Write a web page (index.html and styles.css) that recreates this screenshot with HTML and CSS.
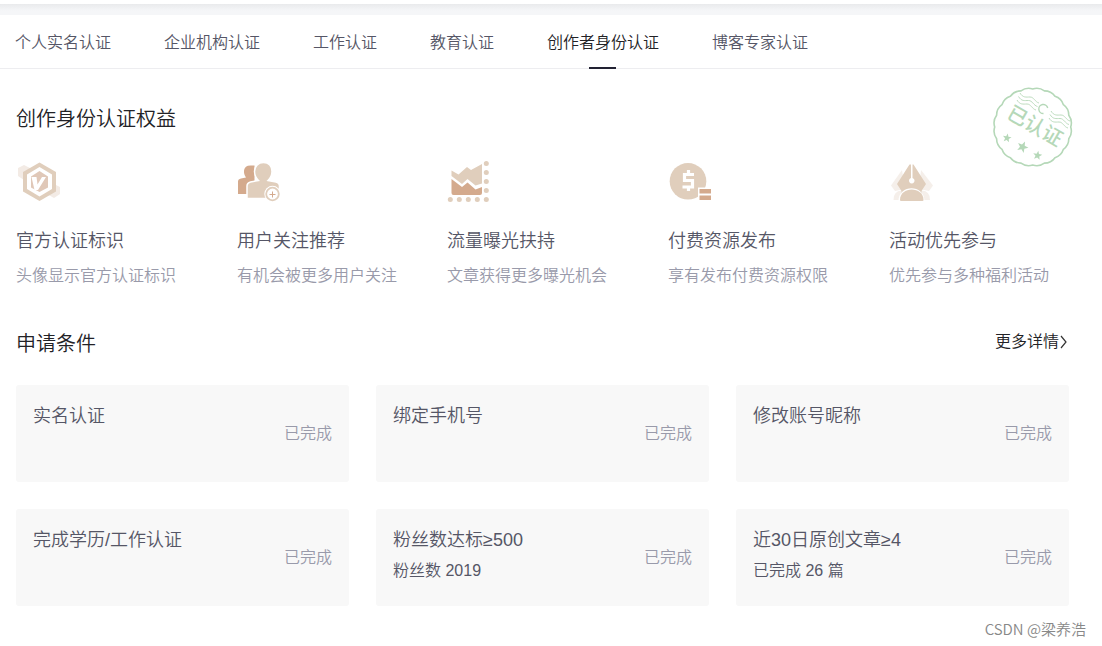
FILE: index.html
```html
<!DOCTYPE html>
<html lang="zh-CN">
<head>
<meta charset="utf-8">
<meta name="viewport" content="width=device-width, initial-scale=1">
<title>创作者身份认证</title>
<link rel="stylesheet" href="styles.css">
</head>
<body>
<div class="topbar"></div>
<nav class="tabs">
  <a class="tab" href="#">个人实名认证</a>
  <a class="tab" href="#">企业机构认证</a>
  <a class="tab" href="#">工作认证</a>
  <a class="tab" href="#">教育认证</a>
  <a class="tab active" href="#" aria-current="page">创作者身份认证</a>
  <a class="tab" href="#">博客专家认证</a>
</nav>
<main class="content">
  <svg class="stamp" width="110" height="105" viewBox="0 0 110 105" role="img" aria-label="已认证">
    <g fill="none" stroke="#b5d8b8">
      <path stroke-width="1.6" transform="translate(52.7 52)" d="M38 0A13 13 0 0 1 36.1 11.7A13 13 0 0 1 30.7 22.3A13 13 0 0 1 22.3 30.7A13 13 0 0 1 11.7 36.1A13 13 0 0 1 0 38A13 13 0 0 1 -11.7 36.1A13 13 0 0 1 -22.3 30.7A13 13 0 0 1 -30.7 22.3A13 13 0 0 1 -36.1 11.7A13 13 0 0 1 -38 0A13 13 0 0 1 -36.1 -11.7A13 13 0 0 1 -30.7 -22.3A13 13 0 0 1 -22.3 -30.7A13 13 0 0 1 -11.7 -36.1A13 13 0 0 1 0 -38A13 13 0 0 1 11.7 -36.1A13 13 0 0 1 22.3 -30.7A13 13 0 0 1 30.7 -22.3A13 13 0 0 1 36.1 -11.7A13 13 0 0 1 38 0Z"/>
      <path stroke-width=".9" d="M40 18c3 5 6 4 10 4s5 5 9 6M38.500 21.500c3 5 6 4 10 4s5 5 9 6M37 25c3 5 6 4 10 4s5 5 9 6M71 36c3 5 6 4 10 4s5 5 9 6M70 39.500c3 5 6 4 10 4s5 5 9 6M69 43c3 5 6 4 10 4s5 5 9 6"/>
      <path stroke-width="1.400" d="M67.700 33A4.500 4.500 0 1 0 63.500 38.500"/>
    </g>
    <g fill="#b5d8b8">
      <text class="stamp-text" text-anchor="middle" transform="translate(55 51) rotate(30)" y="7">已认证</text>
      <path transform="translate(27 63) rotate(10) scale(4.600)" d="M0-1L.25-.34.95-.31.4.13.59.81 0 .42-.59.81-.4.13-.95-.31-.25-.34Z"/>
      <path transform="translate(42.500 72) rotate(25) scale(6)" d="M0-1L.25-.34.95-.31.4.13.59.81 0 .42-.59.81-.4.13-.95-.31-.25-.34Z"/>
      <path transform="translate(57.500 80.500) rotate(10) scale(4.800)" d="M0-1L.25-.34.95-.31.4.13.59.81 0 .42-.59.81-.4.13-.95-.31-.25-.34Z"/>
    </g>
  </svg>

  <h2 class="heading">创作身份认证权益</h2>
  <ul class="benefits">
    <li class="benefit">
      <svg class="icon" width="48" height="48" viewBox="0 0 48 48" aria-hidden="true">
        <path fill="#f3ebe5" d="M8 5l6 3v8l-6 4-6-4V8zM38 24l6 3v7l-6 4-7-4v-7z"/>
        <path fill="#e0cebc" d="M23.500 2.500L40 12v19.500L23.500 41 7 31.500V12z"/>
        <path fill="#fff" d="M23.500 7L36 14.500v14.500L23.500 36.500 11 29V14.500z"/>
        <path fill="#e0c8b8" d="M23.500 11l8.500 5.500v11L23.500 32 15 27.500v-11z"/>
        <path fill="#fff" d="M15.500 17h5l1 7.500 4.500-7.500h4l-8 13h-3.500z"/>
      </svg>
      <h3 class="benefit-title">官方认证标识</h3>
      <p class="benefit-text">头像显示官方认证标识</p>
    </li>
    <li class="benefit">
      <svg class="icon" width="48" height="48" viewBox="0 0 48 48" aria-hidden="true">
        <path fill="#d4aa8d" d="M13.500 5.500h4v15L14 34H1V21.500q0-2.500 3-3l5-1c-3-4-3.500-12 4.500-12z"/>
        <path fill="#e0cebc" stroke="#fff" stroke-width="1.500" d="M26.500 2.500c5.500 0 8.500 4 8.500 9 0 4-2 7-4 9l8 1.500q3.500 1 3.500 4v12.500H10V26q0-3 3.500-4l8-1.500c-2-2-4-5-4-9 0-5 3.500-9 9-9z"/>
        <circle cx="35.500" cy="34" r="8.200" fill="#fff"/>
        <circle cx="35.500" cy="34" r="6.300" fill="#fff" stroke="#e0cebc" stroke-width="1.800"/>
        <path stroke="#d4aa8d" stroke-width="1" d="M32.500 34.500h6m-3-3v6"/>
      </svg>
      <h3 class="benefit-title">用户关注推荐</h3>
      <p class="benefit-text">有机会被更多用户关注</p>
    </li>
    <li class="benefit">
      <svg class="icon" width="48" height="48" viewBox="0 0 48 48" aria-hidden="true">
        <path fill="#e0cebc" d="M4.500 10.500l7 4L20 7l4 3 11-6v19.500l-6.500 2-8-6.500-5.500 5L4.500 16z"/>
        <path fill="#d4aa8d" d="M4.500 19L15 27l5.500-4.500 8 7 6.500-2.500v6q0 2-2 2H6.500q-2 0-2-2z"/>
        <g fill="#e0cebc"><circle cx="39.300" cy="3.500" r="2.500"/><circle cx="39.300" cy="12.500" r="2.500"/><circle cx="39.300" cy="21.500" r="2.500"/><circle cx="39.300" cy="30.500" r="2.500"/><circle cx="39.300" cy="39.500" r="2.500"/><circle cx="30.300" cy="39.500" r="2.500"/><circle cx="21.300" cy="39.500" r="2.500"/><circle cx="12.300" cy="39.500" r="2.500"/><circle cx="3.300" cy="39.500" r="2.500"/></g>
      </svg>
      <h3 class="benefit-title">流量曝光扶持</h3>
      <p class="benefit-text">文章获得更多曝光机会</p>
    </li>
    <li class="benefit">
      <svg class="icon" width="48" height="48" viewBox="0 0 48 48" aria-hidden="true">
        <circle cx="20" cy="21.300" r="18.300" fill="#e0cebc"/>
        <path fill="none" stroke="#fff" stroke-width="3.200" d="M26 14.500H16.500v6H24.500v6.500H14.500M20.500 10v4m0 13v4"/>
        <path fill="#fff" d="M30 27.500h15V42H30z"/>
        <path fill="#d4aa8d" d="M31.500 29H43v4.500H31.500zM31.500 35.500H43V40H31.500z"/>
      </svg>
      <h3 class="benefit-title">付费资源发布</h3>
      <p class="benefit-text">享有发布付费资源权限</p>
    </li>
    <li class="benefit">
      <svg class="icon" width="48" height="48" viewBox="0 0 48 48" aria-hidden="true">
        <path fill="#f5efea" d="M13 10L2 25.500 6 31l10-2zM32 10l12 15.500L40 31l-10-2zM4.500 40q0-9 8-9.500h20.500q8 .5 8 9.500z"/>
        <path fill="#e0cebc" d="M20.500 4.500h4L37 24l-4.500 7v4h-20v-4L8 24z"/>
        <path fill="#fff" d="M22 4h1.500v14a2.800 2.800 0 1 1-1.500 0zM9.500 41c0-17 26-17 26 0z"/>
        <path fill="#e0cebc" d="M11 40c0-14 23.500-14 23.500 0q0 1-1 1H12q-1 0-1-1z"/>
      </svg>
      <h3 class="benefit-title">活动优先参与</h3>
      <p class="benefit-text">优先参与多种福利活动</p>
    </li>
  </ul>

  <div class="section-head">
    <h2 class="heading">申请条件</h2>
    <a class="more" href="#">更多详情<svg width="10" height="14" viewBox="0 0 10 14" aria-hidden="true"><path d="M2 1l5 6-5 6" fill="none" stroke="#333" stroke-width="1.200"/></svg></a>
  </div>
  <ul class="cards">
    <li class="card"><div><h3 class="card-title">实名认证</h3></div><span class="status">已完成</span></li>
    <li class="card"><div><h3 class="card-title">绑定手机号</h3></div><span class="status">已完成</span></li>
    <li class="card"><div><h3 class="card-title">修改账号昵称</h3></div><span class="status">已完成</span></li>
    <li class="card"><div><h3 class="card-title">完成学历/工作认证</h3></div><span class="status">已完成</span></li>
    <li class="card"><div><h3 class="card-title">粉丝数达标≥500</h3><p class="card-text">粉丝数 2019</p></div><span class="status">已完成</span></li>
    <li class="card"><div><h3 class="card-title">近30日原创文章≥4</h3><p class="card-text">已完成 26 篇</p></div><span class="status">已完成</span></li>
  </ul>
</main>
<footer class="credit">CSDN @梁养浩</footer>
</body>
</html>
```
FILE: styles.css
```css
* { box-sizing: border-box; }
body, h2, h3, p, ul { margin: 0; padding: 0; }
body {
  background: #fff;
  color: #222226;
  font-family: "Liberation Sans", "Noto Sans CJK SC", sans-serif;
  font-size: 16px;
  font-weight: 350;
  line-height: 24px;
}
h2, h3 { font-weight: inherit; }
ul { list-style: none; }
a { color: inherit; text-decoration: none; }

.topbar {
  height: 11px;
  margin-top: 4px;
  background: linear-gradient(#e9eaec, #f5f6f8 60%);
}
.tabs {
  display: flex;
  gap: 53px;
  height: 54px;
  padding: 0 15px;
  border-bottom: 1px solid #ededf0;
}
.tab {
  position: relative;
  padding-top: 16px;
  color: #555666;
  white-space: nowrap;
}
.tab.active { color: #222226; }
.tab.active::after {
  content: "";
  position: absolute;
  bottom: -1px;
  left: 50%;
  width: 27px;
  height: 2px;
  margin-left: -14px;
  background: #222233;
}

.content {
  position: relative;
  padding: 35px 33px 0 16px;
}
.stamp {
  position: absolute;
  top: 6px;
  right: 12px;
}
.stamp-text { font-size: 20px; font-weight: 500; }
.heading { font-size: 20px; line-height: 30px; }

.benefits {
  display: grid;
  grid-template-columns: 221fr 210fr 221fr 221fr 180fr;
  margin-top: 26px;
}
.icon { display: block; }
.benefit-title {
  margin-top: 19px;
  color: #555666;
  font-size: 18px;
  line-height: 28px;
}
.benefit-text {
  margin-top: 9px;
  color: #999aaa;
  white-space: nowrap;
}

.section-head {
  display: flex;
  justify-content: space-between;
  margin-top: 41px;
}
.more { display: flex; align-items: center; height: 26px; }

.cards {
  display: grid;
  grid-template-columns: repeat(3, 1fr);
  gap: 27px;
  margin-top: 26px;
}
.card {
  display: flex;
  align-items: center;
  justify-content: space-between;
  min-height: 97px;
  padding: 17px;
  border-radius: 3px;
  background: #f8f8f8;
  color: #555666;
}
.card > div { align-self: flex-start; }
.card-title { font-size: 18px; line-height: 28px; }
.card-text { margin-top: 5px; }
.status { color: #999aaa; }

.credit {
  padding: 11px 16px 5px;
  color: #888;
  font-family: "Noto Sans CJK SC", sans-serif;
  font-size: 15px;
  text-align: right;
}
```
